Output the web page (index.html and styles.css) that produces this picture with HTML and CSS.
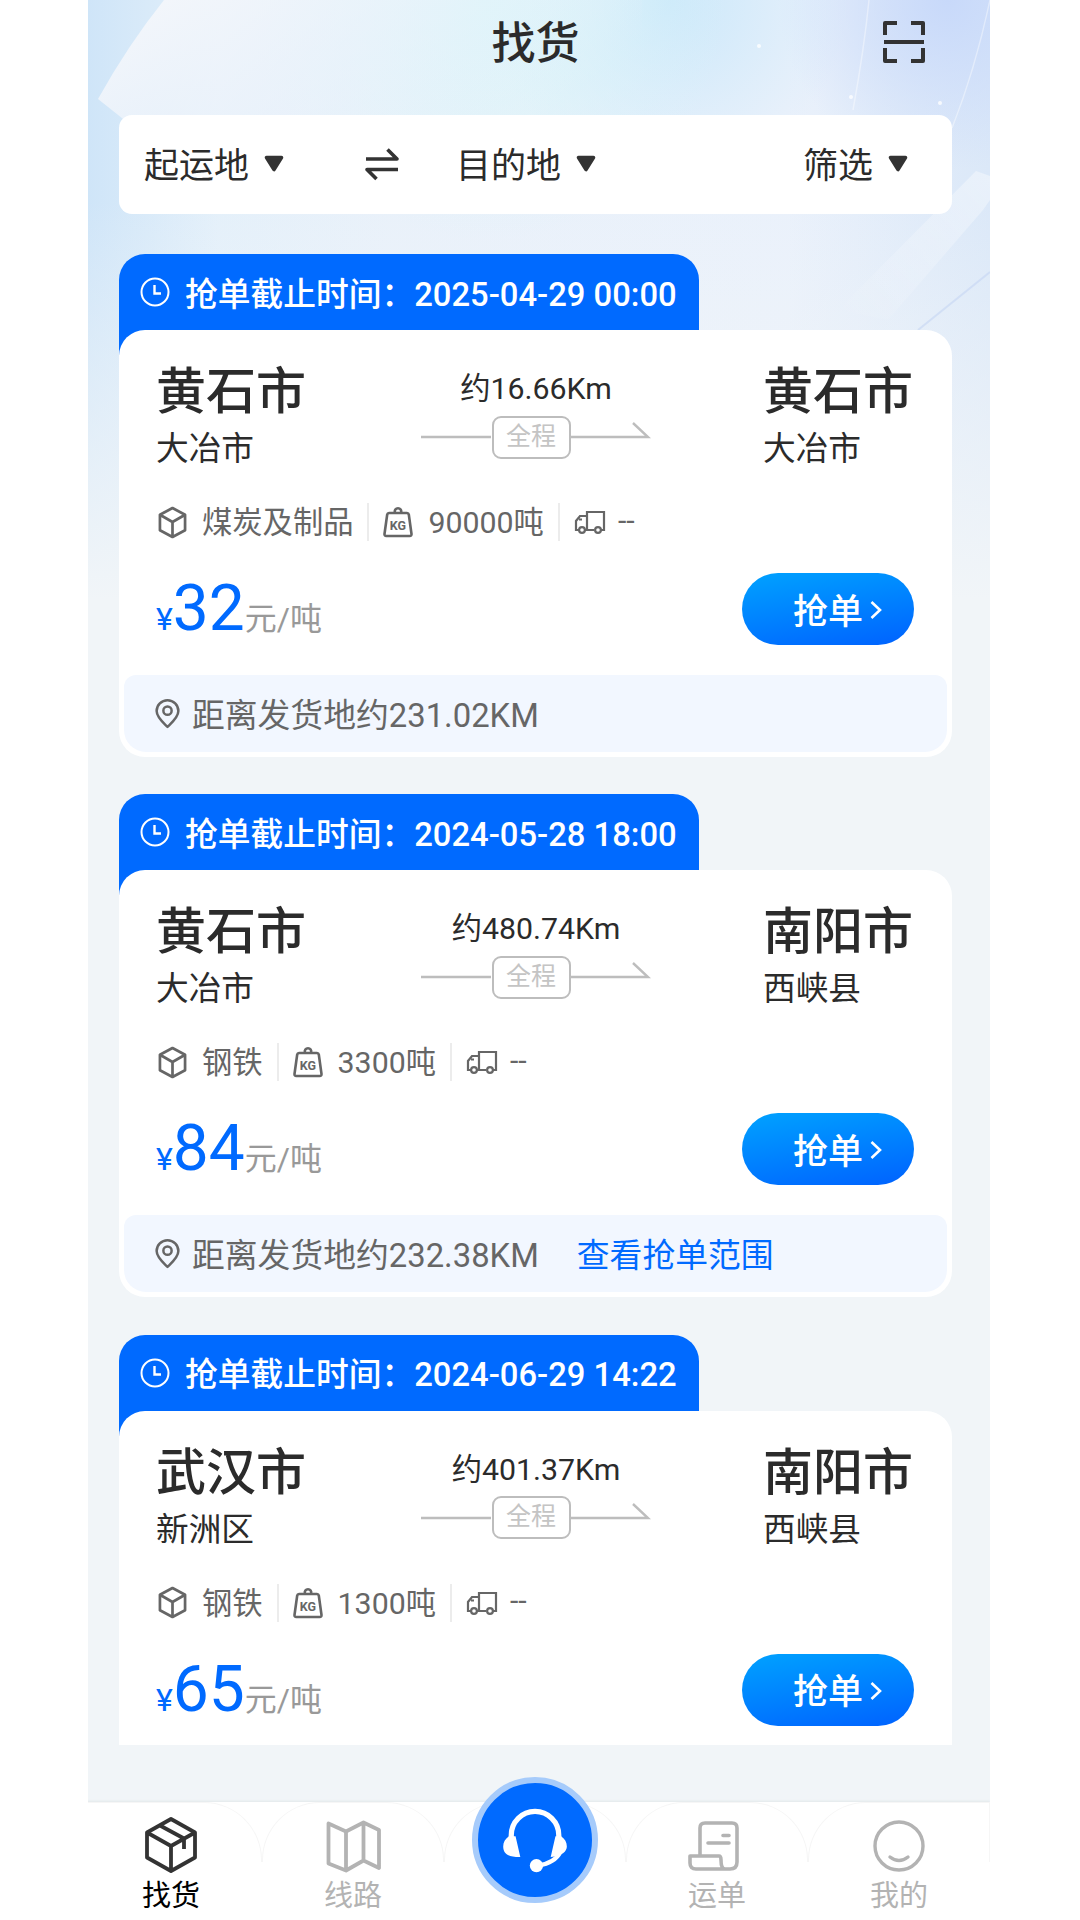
FILE: index.html
```html
<!DOCTYPE html>
<html lang="zh-CN">

<head>
    <meta charset="utf-8">
    <title>找货</title>
    <link rel="stylesheet" href="styles.css">
</head>

<body>
    <!-- 图标 -->
    <svg class="sprite" aria-hidden="true">
        <symbol id="down" viewBox="0 0 20 17">
            <path d="M2.500 2.500h15L10 14.500z" fill="#333" stroke="#333" stroke-width="3.600" stroke-linejoin="round"/>
        </symbol>
        <symbol id="clock" viewBox="0 0 30 30">
            <g fill="none" stroke="#fff" stroke-width="2"><circle cx="15" cy="15" r="13.500"/><path d="M14.500 8v8.500H21" stroke-width="2.400"/></g>
        </symbol>
        <symbol id="box" viewBox="0 0 30 34">
            <path d="M15 2l13 7v16l-13 7-13-7V9zM2 9l13 7.500L28 9M15 16.500V32" fill="none" stroke="#666" stroke-width="2.800" stroke-linejoin="round"/>
        </symbol>
        <symbol id="kg" viewBox="0 0 30 32">
            <path d="M6 7h18q1.500 0 1.800 1.500L28.500 28q.2 2-1.800 2H3.300q-2 0-1.800-2L4.200 8.500Q4.500 7 6 7zM12 6.500a3.200 3.200 0 1 1 6 0" fill="none" stroke="#666" stroke-width="2.600"/>
        </symbol>
        <symbol id="truck" viewBox="0 0 32 24">
            <g fill="none" stroke="#666" stroke-width="2.200"><path d="M5 20H2v-9l4-5h7M13 20V2h17v18h-4M11 20h9M5 9.500h3"/><circle cx="8" cy="20" r="2.900"/><circle cx="24" cy="20" r="2.900"/></g>
        </symbol>
        <symbol id="pin" viewBox="0 0 26 31">
            <g fill="none" stroke="#666" stroke-width="2.600"><path d="M13 29C8.500 24.500 1.700 19 1.700 12.500a11.300 11.300 0 0 1 22.600 0C24.300 19 17.500 24.500 13 29z" stroke-linejoin="round"/><circle cx="13" cy="12" r="4.300"/></g>
        </symbol>
        <symbol id="arrow" viewBox="0 0 230 44">
            <path d="M0 22h70M149 22h78L212 8" fill="none" stroke="#bdbdbd" stroke-width="2.400"/>
        </symbol>
        <symbol id="more" viewBox="0 0 12 20">
            <path d="M1.500 2l8.500 8-8.500 8" fill="none" stroke="#fff" stroke-width="2.600"/>
        </symbol>
    </svg>

    <div class="phone">
        <!-- 顶部背景装饰 -->
        <svg class="deco" viewBox="0 0 902 600" preserveAspectRatio="none">
            <defs>
                <linearGradient id="fade" x1="0" y1="0" x2="1" y2=".3"><stop offset="0" stop-color="#f7f8fb"/><stop offset=".5" stop-color="#edf3fb" stop-opacity=".6"/><stop offset="1" stop-color="#e8f0fb" stop-opacity="0"/></linearGradient>
                <linearGradient id="beam" x1="1" y1="0" x2="0" y2="1"><stop offset="0" stop-color="#fff" stop-opacity=".4"/><stop offset="1" stop-color="#fff" stop-opacity="0"/></linearGradient>
            </defs>
            <path d="M76 0Q40 45 10 99l44 35h500V0z" fill="url(#fade)"/>
            <path d="M888 171L750 310l50 10L895 210l7-10v-24z" fill="url(#beam)"/>
            <path d="M902 272L830 330" stroke="#c6d6f4" stroke-width="2" opacity=".6"/>
            <path d="M902 0q-15 70-38 128M781 0q-5 50-16 110" stroke="#fff" stroke-width="1.500" fill="none" opacity=".4"/>
            <g fill="#fff" opacity=".8"><circle cx="671" cy="46" r="2"/><circle cx="852" cy="103" r="2"/><circle cx="763" cy="97" r="2"/></g>
        </svg>

        <div class="header">
            <h1>找货</h1>
            <svg class="scan" viewBox="0 0 42 42"><path d="M14 2H2v12M28 2h12v12M1 21h40M2 27v13h12M40 27v13H28" fill="none" stroke="#333" stroke-width="4" stroke-linejoin="round"/></svg>
        </div>

        <div class="filter">
            <span>起运地</span><svg class="down"><use href="#down"/></svg>
            <svg class="swap" viewBox="0 0 34 32"><path d="M1 11h31L22.500 1.500M33 21.500H2L11.500 31" fill="none" stroke="#333" stroke-width="3.600" stroke-linejoin="round"/></svg>
            <span>目的地</span><svg class="down"><use href="#down"/></svg>
            <span class="choose">筛选</span><svg class="down"><use href="#down"/></svg>
        </div>

        <!-- 货源列表 -->
        <div class="list">
            <div class="card">
                <div class="deadline"><svg><use href="#clock"/></svg><span>抢单截止时间：2025-04-29 00:00</span></div>
                <div class="content">
                    <div class="route">
                        <div class="place"><h2>黄石市</h2><p>大冶市</p></div>
                        <div class="middle"><p>约16.66Km</p><div class="line"><svg><use href="#arrow"/></svg><span>全程</span></div></div>
                        <div class="place"><h2>黄石市</h2><p>大冶市</p></div>
                    </div>
                    <ul class="goods">
                        <li><svg class="box"><use href="#box"/></svg><span>煤炭及制品</span></li>
                        <li><svg class="kg"><use href="#kg"/><text x="15" y="23.500" text-anchor="middle">KG</text></svg><span>90000吨</span></li>
                        <li><svg class="truck"><use href="#truck"/></svg><span>--</span></li>
                    </ul>
                    <div class="price">
                        <p><i>¥</i><b>32</b>元/吨</p>
                        <a class="grab">抢单<svg><use href="#more"/></svg></a>
                    </div>
                    <div class="distance"><svg><use href="#pin"/></svg><span>距离发货地约231.02KM</span></div>
                </div>
            </div>

            <div class="card">
                <div class="deadline"><svg><use href="#clock"/></svg><span>抢单截止时间：2024-05-28 18:00</span></div>
                <div class="content">
                    <div class="route">
                        <div class="place"><h2>黄石市</h2><p>大冶市</p></div>
                        <div class="middle"><p>约480.74Km</p><div class="line"><svg><use href="#arrow"/></svg><span>全程</span></div></div>
                        <div class="place"><h2>南阳市</h2><p>西峡县</p></div>
                    </div>
                    <ul class="goods">
                        <li><svg class="box"><use href="#box"/></svg><span>钢铁</span></li>
                        <li><svg class="kg"><use href="#kg"/><text x="15" y="23.500" text-anchor="middle">KG</text></svg><span>3300吨</span></li>
                        <li><svg class="truck"><use href="#truck"/></svg><span>--</span></li>
                    </ul>
                    <div class="price">
                        <p><i>¥</i><b>84</b>元/吨</p>
                        <a class="grab">抢单<svg><use href="#more"/></svg></a>
                    </div>
                    <div class="distance"><svg><use href="#pin"/></svg><span>距离发货地约232.38KM</span><a>查看抢单范围</a></div>
                </div>
            </div>

            <div class="card">
                <div class="deadline"><svg><use href="#clock"/></svg><span>抢单截止时间：2024-06-29 14:22</span></div>
                <div class="content">
                    <div class="route">
                        <div class="place"><h2>武汉市</h2><p>新洲区</p></div>
                        <div class="middle"><p>约401.37Km</p><div class="line"><svg><use href="#arrow"/></svg><span>全程</span></div></div>
                        <div class="place"><h2>南阳市</h2><p>西峡县</p></div>
                    </div>
                    <ul class="goods">
                        <li><svg class="box"><use href="#box"/></svg><span>钢铁</span></li>
                        <li><svg class="kg"><use href="#kg"/><text x="15" y="23.500" text-anchor="middle">KG</text></svg><span>1300吨</span></li>
                        <li><svg class="truck"><use href="#truck"/></svg><span>--</span></li>
                    </ul>
                    <div class="price">
                        <p><i>¥</i><b>65</b>元/吨</p>
                        <a class="grab">抢单<svg><use href="#more"/></svg></a>
                    </div>
                </div>
            </div>
        </div>

        <!-- 底部导航 -->
        <ul class="nav">
            <li class="current">
                <svg viewBox="0 0 56 58"><path d="M28 3l24 13.500v25L28 55 4 41.500v-25zM4 16.500L28 30l24-13.500M28 30v25M17 9.500l24 13V33" fill="none" stroke="#333" stroke-width="3.800" stroke-linejoin="round"/></svg>
                <span>找货</span>
            </li>
            <li>
                <svg viewBox="0 0 56 58"><path d="M3.500 7.500v40L21 54.500l17.500-10L54 52V14L38.500 6.500 21 15.500zM21 15.500v39M38.500 6.500v38" fill="none" stroke="#b3b3b3" stroke-width="3.800" stroke-linejoin="round"/></svg>
                <span>线路</span>
            </li>
            <li>
                <div class="service">
                    <svg viewBox="0 0 114 114"><g transform="translate(-3.300 -1) scale(.95)" fill="none" stroke="#fff"><path d="M38.500 60V56a25 25 0 0 1 50 0v4" stroke-width="5.500"/><path d="M36 57c-4 3-6 6-6 11 0 8 6 11 17 11h1l-5-22zM91 57c4 3 6 6 6 11 0 5-5 10-17 11l5-22z" fill="#fff" stroke="none"/><path d="M90 74c-4 8-11 12-23 14" stroke-width="4.500"/><circle cx="65" cy="88" r="7" fill="#fff" stroke="none"/></g></svg>
                </div>
            </li>
            <li>
                <svg viewBox="0 0 56 58"><g fill="none" stroke="#b3b3b3" stroke-width="3.600" stroke-linejoin="round" stroke-linecap="round"><path d="M11 39V12q0-5 5-5h27q5 0 5 5v34q0 7-7 7H7q-6 0-6-6v-7h29q2 0 2 4 0 9 4 9M19 27h21M34 19.500h6"/></g></svg>
                <span>运单</span>
            </li>
            <li>
                <svg viewBox="0 0 56 58"><g fill="none" stroke="#b3b3b3" stroke-width="3.400"><circle cx="28" cy="30" r="24"/><path d="M19 41q9 7 18 0" stroke-linecap="round"/></g></svg>
                <span>我的</span>
            </li>
        </ul>
    </div>
</body>

</html>
```
FILE: styles.css
```css
/* reset */

body,
h1,
h2,
p,
ul,
li {
    margin: 0;
    padding: 0;
}

ul {
    list-style-type: none;
}

i {
    font-style: normal;
}

svg {
    display: block;
    flex: none;
    overflow: visible;
}

body {
    background: #fff;
    color: #2b2b2b;
    font-family: Roboto, "Noto Sans CJK SC", sans-serif;
    overflow: hidden;
}

.sprite {
    position: absolute;
    width: 0;
    height: 0;
}

/* 手机画面 */

.phone {
    position: relative;
    box-sizing: border-box;
    width: 902px;
    height: 1920px;
    margin-left: 88px;
    padding: 0 38px 0 31px;
    overflow: hidden;
    background:
        linear-gradient(180deg, rgba(241, 245, 248, 0) 200px, #f1f5f8 600px),
        radial-gradient(circle at 400px 0, #daf5f9 0, rgba(218, 245, 249, 0) 240px),
        radial-gradient(circle at 580px 0, #cbe8fa 0, rgba(203, 232, 250, 0) 180px),
        radial-gradient(circle at 860px 0, #c8d9fa 0, rgba(200, 217, 250, 0) 170px),
        linear-gradient(90deg, #cfe5f8 0, #e4f0fa 130px, #e9f1fa 300px, #eaf1fb 700px, #dbe8f8 902px);
}

.deco {
    position: absolute;
    top: 0;
    left: 0;
    width: 902px;
    height: 600px;
}

.header {
    position: relative;
    display: flex;
    align-items: center;
    justify-content: center;
    height: 84px;
    margin-bottom: 31px;
}

.header h1 {
    padding-bottom: 5px;
    font-size: 44px;
    font-weight: 500;
}

/* 扫一扫 */
.scan {
    position: absolute;
    right: 27px;
    width: 42px;
    height: 42px;
}

/* 筛选栏 */

.filter {
    position: relative;
    display: flex;
    align-items: center;
    box-sizing: border-box;
    height: 99px;
    margin-bottom: 40px;
    padding: 0 44px 0 25px;
    border-radius: 13px;
    background: #fff;
    font-size: 35px;
}

.filter span {
    padding-bottom: 4px;
}

.down {
    width: 20px;
    height: 17px;
    margin: 0 0 3px 15px;
}

.swap {
    width: 34px;
    height: 32px;
    margin: 0 57px 2px 81px;
}

.filter .choose {
    margin-left: auto;
}

/* 列表 */

.list {
    position: relative;
    display: flex;
    flex-direction: column;
    gap: 37.4px;
    height: 1491px;
    overflow: hidden;
}

.card {
    flex: none;
}

/* 截止时间 */
.deadline {
    display: flex;
    align-items: center;
    box-sizing: border-box;
    width: 580px;
    height: 101px;
    padding: 0 0 25px 21px;
    border-radius: 26px 26px 0 0;
    background: #006aff;
    color: #fff;
    font-size: 32.75px;
    font-weight: 500;
}

.deadline span {
    padding-bottom: 2px;
}

.deadline svg {
    width: 30px;
    height: 30px;
    margin-right: 15px;
}

.content {
    position: relative;
    box-sizing: border-box;
    height: 427px;
    margin-top: -25px;
    padding-bottom: 5px;
    border-radius: 26px;
    background: #fff;
}

.route {
    display: flex;
    justify-content: space-between;
    padding: 32px 36px 0 37px;
}

.place {
    width: 153px;
}

.place h2 {
    font-size: 50px;
    font-weight: 500;
    line-height: 60px;
}

.place p {
    font-size: 32.7px;
    line-height: 54px;
}

.middle {
    display: flex;
    flex-direction: column;
    align-items: center;
    font-size: 30.3px;
    line-height: 53px;
}

.line {
    display: grid;
    place-items: center;
    width: 230px;
    height: 44px;
}

.line svg,
.line span {
    grid-area: 1 / 1;
}

.line svg {
    width: 230px;
    height: 44px;
}

.line span {
    box-sizing: border-box;
    width: 79px;
    height: 43px;
    margin-right: 10px;
    border: 2px solid #bdbdbd;
    border-radius: 9px;
    color: #c4c4c4;
    font-size: 25px;
    line-height: 38px;
    text-align: center;
}

/* 货物信息 */

.goods {
    display: flex;
    align-items: center;
    height: 92px;
    padding-left: 39px;
    color: #666;
    font-size: 30.3px;
}

.goods li {
    display: flex;
    align-items: center;
    height: 38px;
    padding-right: 14px;
}

.goods li + li {
    padding-left: 14px;
    border-left: 2px solid #ececec;
}

.goods span {
    padding-bottom: 4px;
}

.goods svg {
    margin-right: 15px;
}

.box {
    width: 29px;
    height: 33px;
}

.kg {
    width: 30px;
    height: 32px;
}

.kg text {
    font: 700 12.5px Roboto, sans-serif;
    fill: #666;
}

.truck {
    width: 32px;
    height: 24px;
}

.goods .truck {
    margin-right: 12px;
}

/* 价格 */

.price {
    display: flex;
    justify-content: space-between;
    height: 107px;
    padding: 0 38px 0 37px;
}

.price p {
    color: #999;
    font-size: 32px;
    line-height: 82px;
}

.price i,
.price b {
    color: #006aff;
    font-weight: 400;
}

.price b {
    font-size: 64px;
}

.grab {
    display: flex;
    align-items: center;
    box-sizing: border-box;
    width: 172px;
    height: 72px;
    margin-top: 5px;
    padding: 0 0 2px 51px;
    border-radius: 36px;
    background: linear-gradient(170deg, #00a2ff, #0062ff);
    color: #fff;
    font-size: 35px;
    font-weight: 500;
}

.grab svg {
    width: 12px;
    height: 20px;
    margin: 4px 0 0 7px;
}

/* 距离 */

.distance {
    display: flex;
    align-items: center;
    height: 77px;
    margin: 0 5px;
    padding-left: 31px;
    border-radius: 12px 12px 22px 22px;
    background: #f2f7ff;
    color: #666;
    font-size: 32.8px;
}

.distance span,
.distance a {
    padding-bottom: 3px;
}

.distance svg {
    width: 25px;
    height: 30px;
    margin-right: 12px;
}

.distance a {
    margin-left: 38px;
    color: #006aff;
}

/* 底部导航 */

.nav {
    position: relative;
    display: flex;
    height: 118px;
    margin: 57px -38px 0 -39px;
    background: #fff;
    box-shadow: 0 -1px 2px #e2e8ea;
}

.nav li {
    display: flex;
    flex-direction: column;
    align-items: center;
    box-sizing: border-box;
    width: 182px;
    height: 60px;
    padding-top: 13px;
    border: 1px solid #f6f6f6;
    border-bottom: 0;
    border-radius: 58px 58px 0 0;
    color: #b3b3b3;
    font-size: 29px;
}

.nav li:first-child {
    border-top-left-radius: 0;
}

.nav li:last-child {
    border-top-right-radius: 0;
}

.nav li > svg {
    width: 56px;
    height: 58px;
}

.nav span {
    line-height: 44px;
}

.nav .current {
    color: #000;
}

/* 客服按钮 */
.service {
    width: 114px;
    height: 114px;
    margin-top: -39px;
    border: 6px solid #a6cbfb;
    border-radius: 50%;
    background: #006aff;
}
```
